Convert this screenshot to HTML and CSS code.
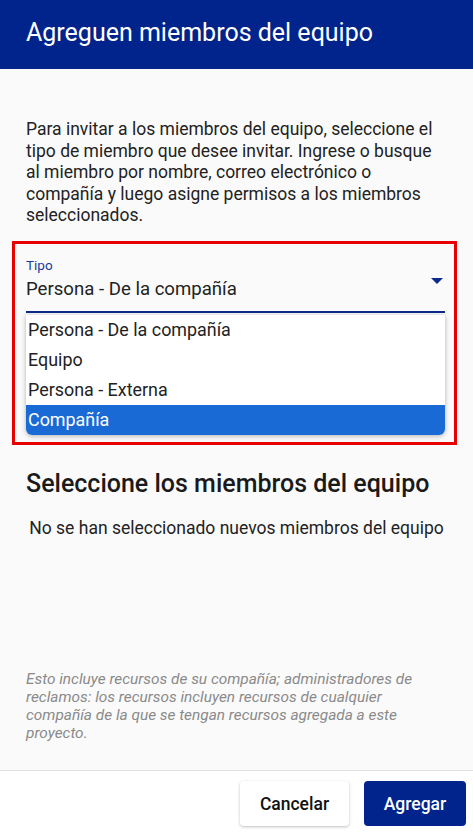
FILE: index.html
```html
<!DOCTYPE html>
<html lang="es">
<head>
<meta charset="utf-8">
<link rel="stylesheet" href="styles.css">
</head>
<body>
<div class="page">
  <header class="header">
    <h1 class="title">Agreguen miembros del equipo</h1>
  </header>
  <main class="content">
    <p class="intro">Para invitar a los miembros del equipo, seleccione el tipo de miembro que desee invitar. Ingrese o busque al miembro por nombre, correo electrónico o compañía y luego asigne permisos a los miembros seleccionados.</p>
    <div class="highlight">
      <div class="field">
        <div class="field-label">Tipo</div>
        <div class="field-row">
          <span class="field-value">Persona - De la compañía</span>
          <svg class="caret" width="12" height="7" viewBox="0 0 12 7"><path d="M0 0 H12 L6 6 Z" fill="#0a2a8c"/></svg>
        </div>
      </div>
      <ul class="menu">
        <li class="menu-item">Persona - De la compañía</li>
        <li class="menu-item">Equipo</li>
        <li class="menu-item">Persona - Externa</li>
        <li class="menu-item selected">Compañía</li>
      </ul>
    </div>
    <h2 class="section-title">Seleccione los miembros del equipo</h2>
    <p class="empty">No se han seleccionado nuevos miembros del equipo</p>
    <p class="note">Esto incluye recursos de su compañía; administradores de reclamos: los recursos incluyen recursos de cualquier compañía de la que se tengan recursos agregada a este proyecto.</p>
  </main>
  <footer class="footer">
    <button class="btn btn-secondary">Cancelar</button>
    <button class="btn btn-primary">Agregar</button>
  </footer>
</div>
</body>
</html>
```
FILE: styles.css
```css
* { box-sizing: border-box; }
html, body { margin: 0; padding: 0; }
body {
  font-family: Roboto, "Noto Sans", sans-serif;
  background: #fafafa;
  color: #222;
  width: 473px;
  height: 833px;
  overflow: hidden;
}
.page {
  display: flex;
  flex-direction: column;
  height: 833px;
}
.header {
  background: #00238c;
  height: 69px;
  display: flex;
  align-items: center;
  padding: 0 26px 4px;
}
.title {
  margin: 0;
  color: #fff;
  font-weight: 400;
  font-size: 25px;
}
.content {
  flex: 1;
  padding: 50px 26px 0;
  display: flex;
  flex-direction: column;
}
.intro {
  margin: 0;
  font-size: 17.5px;
  line-height: 21.5px;
  color: #222;
}
.highlight {
  margin: 14px -10px 0 -14px;
  border: 3px solid #e60000;
  padding: 14px 9px 7px 11px;
}
.field {
  border-bottom: 2px solid #0a2a8c;
  padding-bottom: 9px;
}
.field-label {
  font-size: 13.5px;
  color: #1a3a9c;
  line-height: 14px;
}
.field-row {
  display: flex;
  justify-content: space-between;
  align-items: flex-start;
  margin-top: 4px;
}
.field-value {
  font-size: 18.6px;
  line-height: 26px;
  color: #222;
}
.caret {
  margin: 2px 2px 0 0;
}
.menu {
  list-style: none;
  margin: 2px 0 0;
  padding: 0;
  background: #fff;
  border-radius: 0 0 6px 6px;
  box-shadow: 0 1px 5px rgba(0,0,0,0.3);
  overflow: hidden;
}
.menu-item {
  height: 30px;
  line-height: 30px;
  padding-left: 2px;
  font-size: 17.9px;
  color: #222;
}
.menu-item.selected {
  background: #1a6ad6;
  color: #fff;
}
.section-title {
  margin: 24px 0 0;
  font-size: 25px;
  font-weight: 500;
  color: #1a1a1a;
  line-height: 30px;
}
.empty {
  margin: 19px 0 0;
  font-size: 17.5px;
  text-align: center;
  color: #222;
  line-height: 20px;
}
.note {
  margin: auto 0 28px;
  font-size: 15.4px;
  font-style: italic;
  color: #8a8a8a;
  line-height: 18px;
}
.footer {
  border-top: 1px solid #e0e0e0;
  background: #fff;
  height: 63px;
  display: flex;
  justify-content: flex-end;
  align-items: flex-start;
  gap: 15px;
  padding: 10px 7px 0;
}
.btn {
  font-family: Roboto, sans-serif;
  font-size: 17.5px;
  font-weight: 500;
  height: 45px;
  border-radius: 4px;
  border: none;
  padding: 0;
}
.btn-secondary {
  width: 109px;
  background: #fff;
  color: #111;
  box-shadow: 0 1px 3px rgba(0,0,0,0.25);
}
.btn-primary {
  width: 102px;
  background: #00238c;
  color: #fff;
}
```
